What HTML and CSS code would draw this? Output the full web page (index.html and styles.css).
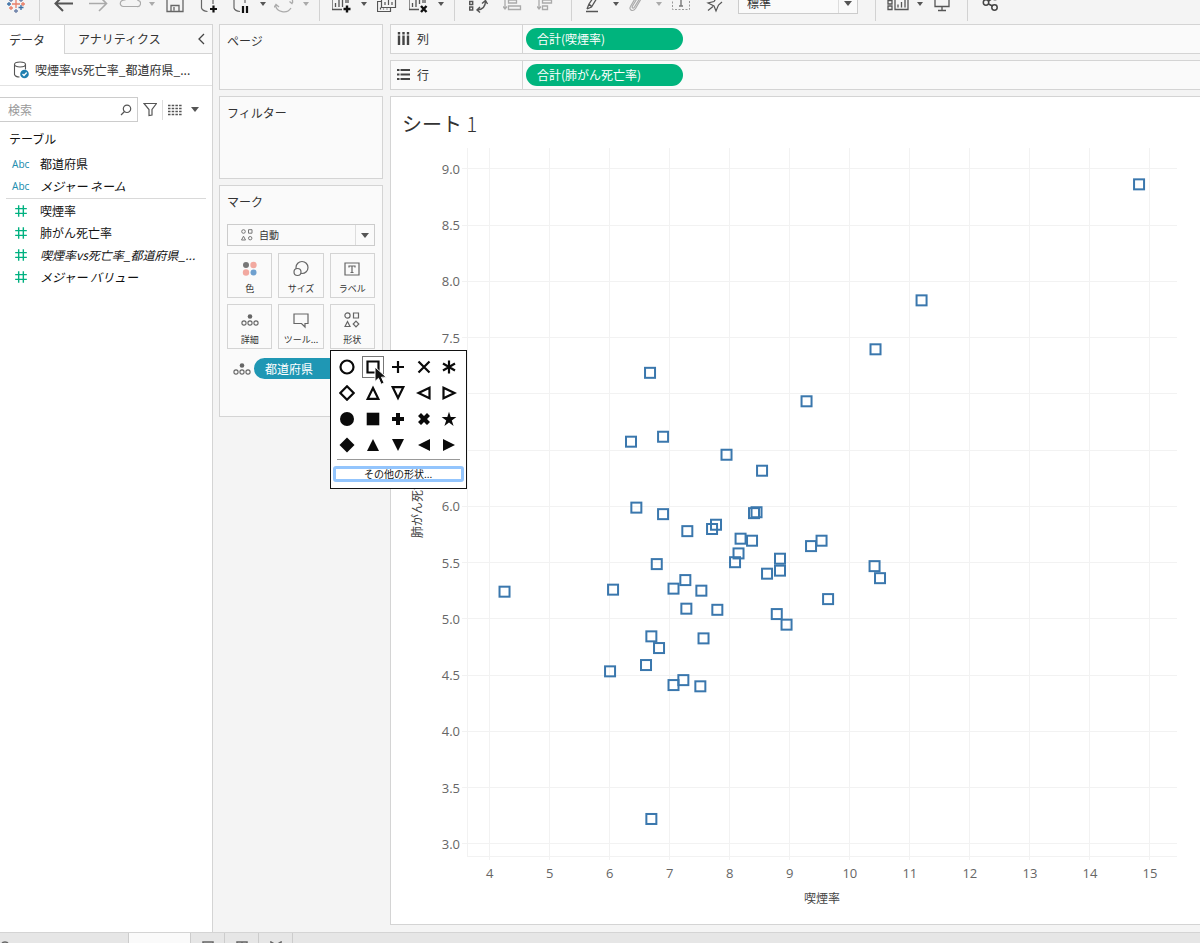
FILE: index.html
```
<!DOCTYPE html>
<html lang="ja">
<head>
    <meta charset="UTF-8">
    <meta name="viewport" content="width=device-width, initial-scale=1.0">
    <title>シート 1</title>
    <link rel="stylesheet" href="styles.css">
</head>
<body>
    <!-- Toolbar -->
    <header class="toolbar">
        <button class="tool" aria-label="スタート ページ"><svg width="20" height="20" viewBox="0 0 20 20" fill="none" stroke-width="1.3"><path d="M10 6v8M6 10h8" stroke="#e8806a"/><path d="M15 11v5M12.500 13.500h5M3 8v4M1 10h4" stroke="#3a6fa5"/><path d="M5 12v4M3 14h4M17 8v4M15 10h4" stroke="#e8806a"/><path d="M10 15v4M8 17h4M5 4v4M3 6h4M15 4v4M13 6h4" stroke="#6b7fa8"/></svg></button>
        <span class="sep"></span>
        <button class="tool" aria-label="元に戻す"><svg width="20" height="20" viewBox="0 0 20 20" fill="none" stroke="#555" stroke-width="2"><path d="M19 9.500H2M9 2L1.500 9.500 9 17"/></svg></button>
        <button class="tool" aria-label="やり直し"><svg width="20" height="20" viewBox="0 0 20 20" fill="none" stroke="#aaa" stroke-width="1.6"><path d="M1 9.500h17M11 2l7.500 7.500L11 17"/></svg></button>
        <button class="tool split" aria-label="保存"><svg width="22" height="20" viewBox="0 0 22 20" fill="none" stroke="#aaa" stroke-width="1.2"><path d="M4.500 12.500h13.500a3 3 0 0 0 1-6C18 2 9 1 6 6c-6 0-6 6-1.500 6.500z"/></svg></button>
        <button class="caret pale" aria-label="保存メニュー"></button>
        <button class="tool" aria-label="ファイルに保存"><svg width="18" height="20" viewBox="0 0 18 20" fill="none" stroke="#666" stroke-width="1.300"><path d="M1 1h13l3 3v13.500H1zM5 17v-5.500h8V17M8 13v3.500"/></svg></button>
        <button class="tool" aria-label="新しいデータ ソース"><svg width="20" height="20" viewBox="0 0 20 20" fill="none" stroke="#666" stroke-width="1.200"><path d="M2.500 3v11q1 3 6 3.500M14 3v7"/><path d="M14.500 11.500v7M11 15h7" stroke="#111" stroke-width="2.200"/></svg></button>
        <button class="tool split" aria-label="自動更新の一時停止"><svg width="20" height="20" viewBox="0 0 20 20" fill="none" stroke="#666" stroke-width="1.200"><path d="M3 3v11q1 3 6 3.500M14 3v6"/><path d="M12 12v7M16 12v7" stroke="#111" stroke-width="2.200"/></svg></button>
        <button class="caret" aria-label="自動更新メニュー"></button>
        <button class="tool split" aria-label="更新の実行"><svg width="20" height="20" viewBox="0 0 20 20" fill="none" stroke="#aaa" stroke-width="1.300"><path d="M1.500 11a8.300 7.500 0 0 0 15.500 3M18.500 9A8.300 8 0 0 0 3 4M0 13.500l2-3 3 2.500M15.500 7.500l3 2.500"/></svg></button>
        <button class="caret pale" aria-label="更新メニュー"></button>
        <span class="sep"></span>
        <button class="tool split" aria-label="新しいワークシート"><svg width="20" height="20" viewBox="0 0 20 20" fill="none" stroke="#555" stroke-width="1.300"><path d="M10 15.500H0V2h16v7M3.500 13V9M7 13V6M10.500 13V3M14 9V6"/><path d="M15 11.500v7M11.500 15h7" stroke="#111" stroke-width="2.400"/></svg></button>
        <button class="caret" aria-label="新しいワークシート メニュー"></button>
        <button class="tool" aria-label="複製"><svg width="20" height="20" viewBox="0 0 20 20" fill="none" stroke="#555" stroke-width="1.200"><path d="M4 7.500H.5v10h13v-4M4.500 4v9.500h14V3M3.500 15.500v-2M6.500 15.500v-1M10 15.500v-1M8 11V8M11.500 11V6M15 11V8"/></svg></button>
        <button class="tool split" aria-label="シートのクリア"><svg width="20" height="20" viewBox="0 0 20 20" fill="none" stroke="#555" stroke-width="1.300"><path d="M10 15.500H0V2h16v7M3.500 13V9M7 13V6M10.500 10V3M14 9V6"/><path d="M12 12l5.500 6M17.500 12L12 18" stroke="#111" stroke-width="2.400"/></svg></button>
        <button class="caret" aria-label="クリア メニュー"></button>
        <span class="sep"></span>
        <button class="tool" aria-label="行と列の交換"><svg width="20" height="20" viewBox="0 0 20 20" fill="none" stroke="#555" stroke-width="1.400"><path d="M.7 7.500h3v3h-3zM.7 13h3v3h-3zM8 16q8.500-.5 8.500-9M11 13l-3 3 3 2.500M13 9.500l3.500-3 2 3.500"/></svg></button>
        <button class="tool" aria-label="昇順で並べ替え"><svg width="20" height="20" viewBox="0 0 20 20" fill="none" stroke="#aaa" stroke-width="1.300"><path d="M2 3v12.500M0 12.500l2 2.500 2-2.500M5.500 6h8v3h-8zM5.500 12h12v3.500h-12z"/></svg></button>
        <button class="tool" aria-label="降順で並べ替え"><svg width="20" height="20" viewBox="0 0 20 20" fill="none" stroke="#aaa" stroke-width="1.300"><path d="M2 3v12.500M0 12.500l2 2.500 2-2.500M5.500 6h9v3h-9zM5.500 12h5v3.500h-5z"/></svg></button>
        <span class="sep"></span>
        <button class="tool split" aria-label="ハイライト"><svg width="20" height="20" viewBox="0 0 20 20" fill="none" stroke="#555" stroke-width="1.300"><path d="M3 15l2-5L11 1M3 15l4.500-2L13 4M5 10l3 3M2 17.500h12"/></svg></button>
        <button class="caret" aria-label="ハイライト メニュー"></button>
        <button class="tool split" aria-label="グループ"><svg width="20" height="20" viewBox="0 0 20 20" fill="none" stroke="#aaa" stroke-width="1.200"><path d="M11 3L5.500 12c-1 2 1 3 2 1L13 4M14 5l-5.500 9.500c-3 4-7 1-5-2L9 3"/></svg></button>
        <button class="caret pale" aria-label="グループ メニュー"></button>
        <button class="tool" aria-label="マーク ラベル"><svg width="20" height="20" viewBox="0 0 20 20" fill="none"><path d="M.5 4v11.500h17V4" stroke="#999" stroke-dasharray="2 1.500"/><path d="M9 4v8M7 12h4" stroke="#777" stroke-width="1.400"/></svg></button>
        <button class="tool" aria-label="軸の固定"><svg width="20" height="20" viewBox="0 0 20 20" fill="none" stroke="#555" stroke-width="1.200"><path d="M11 3L8 7.500 2 9l6 3 2 5 2.500-6L16 8M7 12.500l-5 4"/></svg></button>
        <span class="select fit">
            <select aria-label="表示方法"><option>標準</option></select>
        </span>
        <span class="sep"></span>
        <button class="tool split" aria-label="表示形式"><svg width="22" height="20" viewBox="0 0 22 20" fill="none" stroke="#555" stroke-width="1.300"><path d="M1 6.500h4v3.500H1zM1 12h4v3.500H1zM8 3v12.500h13V3M11 13.500v-3M14.500 13.500V8M18 13.500V6"/></svg></button>
        <button class="caret" aria-label="表示形式メニュー"></button>
        <button class="tool" aria-label="プレゼンテーション モード"><svg width="18" height="20" viewBox="0 0 18 20" fill="none" stroke="#555" stroke-width="1.300"><path d="M1 4v8.500h14V4M8 12.500V17M4 16.500h8"/></svg></button>
        <span class="sep"></span>
        <button class="tool" aria-label="共有"><svg width="20" height="20" viewBox="0 0 20 20" fill="none" stroke="#444" stroke-width="1.500"><circle cx="4" cy="8.500" r="2.700"/><circle cx="12.500" cy="13.500" r="2.700"/><circle cx="13" cy="3" r="2.700"/><path d="M6.500 10l4 2M6.500 7l4-2.500"/></svg></button>
    </header>

    <main class="workspace">
        <!-- Data pane -->
        <aside class="data-pane">
            <div class="pane-tabs">
                <button class="pane-tab active">データ</button>
                <button class="pane-tab">アナリティクス
                    <svg width="8" height="12" viewBox="0 0 8 12" fill="none" stroke="#444" stroke-width="1.300"><path d="M7 1L2 6l5 5"/></svg>
                </button>
            </div>
            <div class="source">
                <svg width="16" height="18" viewBox="0 0 16 18" fill="none" stroke="#555" stroke-width="1.100"><ellipse cx="7" cy="3.500" rx="5.500" ry="2.500"/><path d="M1.500 3.500v10q1 2.500 5 2.500M12.500 3.500v5"/><circle cx="11.500" cy="13" r="4.300" fill="#1f7fb0" stroke="none"/><path d="M9.500 13l1.500 1.500 2.700-3" stroke="#fff" stroke-width="1.300"/></svg>
                <span>喫煙率vs死亡率_都道府県_...</span>
            </div>
            <div class="search-row">
                <div class="search">
                    <input type="text" placeholder="検索" aria-label="検索">
                    <svg width="12" height="12" viewBox="0 0 12 12" fill="none" stroke="#555" stroke-width="1.200"><circle cx="7" cy="4.800" r="3.700"/><path d="M4.500 7.500L1 11"/></svg>
                </div>
                <button class="icon-button" aria-label="フィルター"><svg width="14" height="15" viewBox="0 0 14 15" fill="none" stroke="#555" stroke-width="1.200"><path d="M1 1.500h12.500L9 7.500v5.500l-3 .5V7.500z"/></svg></button>
                <button class="icon-button list" aria-label="表示"><svg width="14" height="12" viewBox="0 0 14 12" stroke="#555" stroke-width="1.300"><path d="M0 1.500h14M0 4.500h14M0 7.500h14M0 10.500h14" stroke-dasharray="2.500 1.200"/></svg></button>
                <button class="caret large" aria-label="表示メニュー"></button>
            </div>
            <h2>テーブル</h2>
            <ul class="fields">
                <li><span class="abc">Abc</span>都道府県</li>
                <li class="generated"><span class="abc">Abc</span>メジャー ネーム</li>
            </ul>
            <ul class="fields measures">
                <li><svg class="hash" viewBox="0 0 12 12"><path d="M4 1v10M8 1v10M1 4h10M1 8h10"/></svg>喫煙率</li>
                <li><svg class="hash" viewBox="0 0 12 12"><path d="M4 1v10M8 1v10M1 4h10M1 8h10"/></svg>肺がん死亡率</li>
                <li class="generated"><svg class="hash" viewBox="0 0 12 12"><path d="M4 1v10M8 1v10M1 4h10M1 8h10"/></svg>喫煙率vs死亡率_都道府県_...</li>
                <li class="generated"><svg class="hash" viewBox="0 0 12 12"><path d="M4 1v10M8 1v10M1 4h10M1 8h10"/></svg>メジャー バリュー</li>
            </ul>
        </aside>

        <!-- Cards -->
        <section class="cards">
            <div class="card pages"><h3>ページ</h3></div>
            <div class="card filters"><h3>フィルター</h3></div>
            <div class="card marks">
                <h3>マーク</h3>
                <div class="select mark-type">
                    <svg width="12" height="12" viewBox="0 0 12 12" fill="none" stroke="#777"><circle cx="2.500" cy="2.500" r="1.800"/><path d="M7.500 .7H11v3.500H7.500zM.5 11l2-3.800 2 3.800z"/><circle cx="9.200" cy="9.200" r="1.700"/></svg>
                    <select aria-label="マーク タイプ"><option>自動</option></select>
                </div>
                <div class="mark-grid">
                    <button><svg width="18" height="18" viewBox="0 0 18 18"><circle cx="5" cy="5" r="3" fill="#777"/><circle cx="12.500" cy="5" r="3.200" fill="#f2a9a0"/><circle cx="5" cy="12.500" r="3.200" fill="#f2a9a0"/><circle cx="12.500" cy="12.500" r="3" fill="#6fa0cf"/></svg>色</button>
                    <button><svg width="18" height="18" viewBox="0 0 18 18" fill="none" stroke="#666" stroke-width="1.200"><circle cx="10" cy="7.500" r="6"/><circle cx="5.500" cy="12" r="3.500" fill="#fafafa"/></svg>サイズ</button>
                    <button><svg width="18" height="18" viewBox="0 0 18 18" fill="none" stroke="#666" stroke-width="1.200"><path d="M2 3h14v12H2zM6 7.500V6h6v1.500M9 6v6.500M7.500 12.500h3"/></svg>ラベル</button>
                    <button><svg width="18" height="18" viewBox="0 0 18 18" fill="none" stroke="#666" stroke-width="1.100"><circle cx="9" cy="5.500" r="2.300" fill="#666" stroke="none"/><circle cx="3" cy="12" r="2.100"/><circle cx="9" cy="12" r="2.100"/><circle cx="15" cy="12" r="2.100"/></svg>詳細</button>
                    <button><svg width="18" height="18" viewBox="0 0 18 18" fill="none" stroke="#666" stroke-width="1.200"><path d="M2 3h14v9.500h-3V16l-3.500-3.500H2z"/></svg>ツール...</button>
                    <div class="shape-slot">
                        <button><svg width="18" height="18" viewBox="0 0 18 18" fill="none" stroke="#666" stroke-width="1.200"><circle cx="4.500" cy="4.500" r="2.600"/><path d="M10.500 2h5v5h-5zM2 15.500l2.500-5 2.500 5zM13 10.200l2.800 2.800-2.800 2.800-2.800-2.800z"/></svg>形状</button>
                        <div class="shape-menu">
                            <div class="shapes">
                                <button aria-label="円"><svg class="open" viewBox="0 0 16 16"><circle cx="8" cy="8" r="6.500"/></svg></button>
                                <button class="current" aria-label="四角"><svg class="open" viewBox="0 0 16 16"><path d="M2.500 2.500h11v11h-11z"/></svg></button>
                                <button aria-label="プラス"><svg class="open" viewBox="0 0 16 16"><path d="M8 2v12M2 8h12"/></svg></button>
                                <button aria-label="バツ"><svg class="open" viewBox="0 0 16 16"><path d="M2.500 2.500l11 11M13.500 2.500l-11 11"/></svg></button>
                                <button aria-label="アスタリスク"><svg class="open" viewBox="0 0 16 16"><path d="M8 1.500v13M2 4.500l12 7M14 4.500l-12 7"/></svg></button>
                                <button aria-label="ひし形"><svg class="open" viewBox="0 0 16 16"><path d="M8 1.300L14.700 8 8 14.700 1.300 8z"/></svg></button>
                                <button aria-label="上三角"><svg class="open" viewBox="0 0 16 16"><path d="M8 3l5.300 10.800H2.700z"/></svg></button>
                                <button aria-label="下三角"><svg class="open" viewBox="0 0 16 16"><path d="M8 13L2.700 2.200h10.600z"/></svg></button>
                                <button aria-label="左三角"><svg class="open" viewBox="0 0 16 16"><path d="M2.500 8L13.500 2.700v10.600z"/></svg></button>
                                <button aria-label="右三角"><svg class="open" viewBox="0 0 16 16"><path d="M13.500 8L2.500 2.700v10.600z"/></svg></button>
                                <button aria-label="塗りつぶし円"><svg viewBox="0 0 16 16"><circle cx="8" cy="8" r="7"/></svg></button>
                                <button aria-label="塗りつぶし四角"><svg viewBox="0 0 16 16"><path d="M1.700 1.700h12.600v12.600H1.700z"/></svg></button>
                                <button aria-label="太いプラス"><svg viewBox="0 0 16 16"><path d="M6 2h4v4h4v4h-4v4H6v-4H2V6h4z"/></svg></button>
                                <button aria-label="太いバツ"><svg viewBox="0 0 16 16"><path d="M5 2l3 3 3-3 3 3-3 3 3 3-3 3-3-3-3 3-3-3 3-3-3-3z"/></svg></button>
                                <button aria-label="星"><svg viewBox="0 0 16 16"><path d="M8 .7l1.700 5.300h5.700l-4.600 3.400 1.800 5.600L8 11.600 3.400 15l1.800-5.600L.6 6h5.700z"/></svg></button>
                                <button aria-label="塗りつぶしひし形"><svg viewBox="0 0 16 16"><path d="M8 .5L15.500 8 8 15.500.5 8z"/></svg></button>
                                <button aria-label="塗りつぶし上三角"><svg viewBox="0 0 16 16"><path d="M8 2l6 12H2z"/></svg></button>
                                <button aria-label="塗りつぶし下三角"><svg viewBox="0 0 16 16"><path d="M8 14L2 2h12z"/></svg></button>
                                <button aria-label="塗りつぶし左三角"><svg viewBox="0 0 16 16"><path d="M2 8l12-6v12z"/></svg></button>
                                <button aria-label="塗りつぶし右三角"><svg viewBox="0 0 16 16"><path d="M14 8L2 2v12z"/></svg></button>
                            </div>
                            <button class="more-shapes">その他の形状...</button>
                            <svg class="pointer" width="14" height="20" viewBox="0 0 14 20"><path d="M1 1v14.500l3.500-3.200 2.600 6 3-1.300-2.600-5.800h4.800z" fill="#111" stroke="#fff"/></svg>
                        </div>
                    </div>
                </div>
                <div class="mark-field">
                    <svg width="18" height="18" viewBox="0 0 18 18" fill="none" stroke="#666" stroke-width="1.100"><circle cx="9" cy="5.500" r="2.300" fill="#666" stroke="none"/><circle cx="3" cy="12" r="2.100"/><circle cx="9" cy="12" r="2.100"/><circle cx="15" cy="12" r="2.100"/></svg>
                    <button class="pill dimension">都道府県</button>
                </div>
            </div>
        </section>

        <!-- Shelves and sheet -->
        <section class="view">
            <div class="shelf">
                <span class="shelf-name"><svg width="14" height="14" viewBox="0 0 14 14" stroke="#444" stroke-width="2.400"><path d="M2 0v2.500M2 3.500V13M6.500 0v2.500M6.500 3.500V13M11 0v2.500M11 3.500V13"/></svg>列</span>
                <button class="pill">合計(喫煙率)</button>
            </div>
            <div class="shelf">
                <span class="shelf-name"><svg width="14" height="14" viewBox="0 0 14 14" stroke="#444" stroke-width="2"><path d="M0 2h2.500M3.500 2H13M0 6.500h2.500M3.500 6.500H13M0 11h2.500M3.500 11H13"/></svg>行</span>
                <button class="pill">合計(肺がん死亡率)</button>
            </div>
            <div class="sheet">
                <h1>シート <span>1</span></h1>
                <div id="chart"></div>
            </div>
        </section>
    </main>

    <!-- Sheet tabs -->
    <footer class="sheet-tabs">
        <button class="source-tab" aria-label="データ ソース"><svg width="12" height="12" viewBox="0 0 12 12" fill="none" stroke="#666" stroke-width="1.500"><ellipse cx="5" cy="3" rx="3" ry="2"/></svg></button>
        <button class="sheet-tab" aria-label="シート 1"></button>
        <button class="new-tab" aria-label="新しいワークシート"><svg width="12" height="12" viewBox="0 0 12 12" fill="none" stroke="#666" stroke-width="1.500"><path d="M1 1h10v10H1z"/></svg></button>
        <button class="new-tab" aria-label="新しいダッシュボード"><svg width="12" height="12" viewBox="0 0 12 12" fill="none" stroke="#666" stroke-width="1.500"><path d="M1 1h10v10H1zM6 1v10"/></svg></button>
        <button class="new-tab" aria-label="新しいストーリー"><svg width="12" height="12" viewBox="0 0 12 12" fill="none" stroke="#666" stroke-width="1.500"><path d="M1 11V1l5 3 5-3v10"/></svg></button>
    </footer>

    <script src="chart.js"></script>
</body>
</html>
```
FILE: styles.css
```
* {
    box-sizing: border-box;
}

body {
    font-family: "Noto Sans CJK JP", sans-serif;
    font-size: 12px;
    line-height: 18px;
    color: #333;
    margin: 0;
    display: flex;
    flex-direction: column;
    min-height: 100vh;
    background-color: #f4f4f4;
}

h1, h2, h3, ul {
    margin: 0;
    padding: 0;
    font-weight: normal;
}

button, input, select {
    font: inherit;
    color: inherit;
    margin: 0;
    padding: 0;
    border: none;
    background: none;
}

svg {
    display: block;
    flex: none;
}

/* Toolbar */
.toolbar {
    display: flex;
    align-items: flex-end;
    height: 24px;
    padding-bottom: 10px;
    overflow: hidden;
}

.tool {
    display: flex;
    justify-content: center;
    flex: none;
    width: 34px;
}

.tool:first-child {
    width: 32px;
}

.tool.split {
    width: 30px;
}

.caret {
    flex: none;
    width: 13px;
    height: 20px;
}

.caret::before,
.select::after {
    content: "";
    display: block;
    width: 0;
    margin: auto;
    border: 3px solid transparent;
    border-top: 4px solid #555;
    border-bottom: none;
}

.caret.pale::before {
    border-top-color: #aaa;
}

.sep {
    flex: none;
    width: 1px;
    height: 30px;
    margin: 0 7px -7px;
    background-color: #d2d2d2;
}

.select {
    display: flex;
    align-items: center;
    border: 1px solid #ccc;
    background-color: #fafafa;
    position: relative;
}

.select select {
    appearance: none;
    flex: 1;
    align-self: stretch;
    border-right: 1px solid #ddd;
    margin-right: 18px;
}

.select::after {
    position: absolute;
    right: 5px;
    border-width: 5px 4px 0;
}

.fit {
    flex: none;
    width: 120px;
    height: 22px;
    margin: 0 10px 0 5px;
}

.fit select {
    padding-left: 8px;
}

/* Workspace */
.workspace {
    display: flex;
    flex: 1;
}

.data-pane {
    flex: none;
    width: 213px;
    border-top: 1px solid #d4d4d4;
    border-right: 1px solid #d4d4d4;
    background-color: white;
}

.pane-tabs {
    display: flex;
    height: 29px;
}

.pane-tab {
    width: 64px;
    padding-left: 9px;
    text-align: left;
}

.pane-tab:not(.active) {
    display: flex;
    flex: 1;
    justify-content: space-between;
    align-items: center;
    padding: 0 7px 0 13px;
    border-left: 1px solid #d4d4d4;
    border-bottom: 1px solid #d4d4d4;
    background-color: #f9f9f9;
}

.source {
    display: flex;
    align-items: center;
    gap: 6px;
    height: 32px;
    padding-left: 13px;
    border-bottom: 1px solid #e2e2e2;
    white-space: nowrap;
}

.search-row {
    display: flex;
    align-items: center;
    margin-top: 11px;
}

.search {
    display: flex;
    align-items: center;
    flex: none;
    width: 138px;
    height: 25px;
    padding: 0 5px 0 8px;
    border: 1px solid #ccc;
    border-left: none;
}

.search input {
    flex: 1;
    min-width: 0;
    outline: none;
}

.search input::placeholder {
    color: #999;
    opacity: 1;
}

.icon-button {
    flex: none;
    padding: 4px 5px;
}

.icon-button.list {
    border-left: 1px solid #ddd;
}

.caret.large {
    width: 16px;
}

.caret.large::before {
    border-width: 5px 4px 0;
}

.data-pane h2 {
    margin-top: 8px;
    padding-left: 9px;
    font-size: 12px;
    color: #111;
}

.fields {
    margin: 5px 6px 0;
    list-style: none;
    color: #111;
}

.fields li {
    display: flex;
    align-items: center;
    height: 22px;
    padding-left: 6px;
    white-space: nowrap;
}

.fields .generated {
    font-style: italic;
}

.measures {
    margin-top: 1px;
    padding-top: 1px;
    border-top: 1px solid #d9d9d9;
}

.abc {
    width: 28px;
    font-family: "Noto Sans", sans-serif;
    font-size: 10px;
    font-style: normal;
    color: #1f8fb0;
}

.hash {
    width: 14px;
    height: 14px;
    margin: 0 12px 0 2px;
    fill: none;
    stroke: #00b180;
    stroke-width: 1.2;
}

/* Cards */
.cards {
    display: flex;
    flex-direction: column;
    flex: none;
    gap: 6px;
    width: 177px;
    padding: 0 7px 0 6px;
}

.card {
    padding: 7px;
    border: 1px solid #d4d4d4;
    background-color: #fafafa;
}

.card h3 {
    font-size: 12px;
}

.pages {
    min-height: 66px;
}

.filters {
    min-height: 83px;
}

.marks {
    min-height: 232px;
}

.mark-type {
    height: 22px;
    margin-top: 13px;
    padding-left: 13px;
    gap: 6px;
    font-size: 10px;
}

.mark-grid {
    display: grid;
    grid-template-columns: repeat(3, 1fr);
    gap: 6px;
    margin-top: 7px;
}

.shape-slot {
    position: relative;
}

.mark-grid > button,
.shape-slot > button {
    display: flex;
    flex-direction: column;
    align-items: center;
    gap: 4px;
    width: 100%;
    height: 45px;
    padding-top: 6px;
    border: 1px solid #d4d4d4;
    font-size: 9px;
    line-height: 14px;
    white-space: nowrap;
}

.mark-field {
    display: flex;
    align-items: center;
    gap: 3px;
    margin-top: 9px;
    padding-left: 6px;
}

.pill {
    width: 157px;
    height: 22px;
    padding-left: 11px;
    border-radius: 11px;
    background-color: #00b47d;
    color: white;
    text-align: left;
}

.pill.dimension {
    width: 120px;
    height: 21px;
    background-color: #1f97b4;
}

/* Shape menu */
.shape-menu {
    position: absolute;
    top: calc(100% + 1px);
    left: 0;
    z-index: 1;
    width: 137px;
    padding: 3px 2px 6px;
    border: 1px solid #111;
    background-color: white;
}

.shapes {
    display: grid;
    grid-template-columns: repeat(5, 1fr);
    margin: 0 2px;
}

.shapes button {
    display: flex;
    align-items: center;
    justify-content: center;
    height: 26px;
}

.shapes svg {
    width: 16px;
    height: 16px;
    fill: #0a0a0a;
}

.shapes .open {
    fill: none;
    stroke: #0a0a0a;
    stroke-width: 2.2;
}

.shapes .current svg {
    width: 22px;
    height: 22px;
    padding: 2px;
    border: 1px solid #777;
}

.more-shapes {
    display: block;
    width: 100%;
    height: 16px;
    margin-top: 6px;
    border: 3px solid #93c5fd;
    border-radius: 3px;
    color: #111;
    font-size: 10px;
    line-height: 10px;
}

.shapes::after {
    content: "";
    grid-column: 1 / -1;
    height: 1px;
    margin: 1px 2px 0;
    background-color: #999;
}

.pointer {
    position: absolute;
    left: 43px;
    top: 15px;
}

/* Shelves and sheet */
.view {
    display: flex;
    flex-direction: column;
    flex: 1;
    min-width: 0;
    padding-bottom: 7px;
}

.shelf {
    display: flex;
    align-items: center;
    gap: 3px;
    height: 30px;
    margin-bottom: 6px;
    border: 1px solid #d4d4d4;
    border-right: none;
    background-color: #fafafa;
}

.shelf-name {
    display: flex;
    align-items: center;
    align-self: stretch;
    gap: 6px;
    width: 132px;
    padding-left: 6px;
    border-right: 1px solid #d4d4d4;
}

.sheet {
    display: flex;
    flex-direction: column;
    flex: 1;
    border: 1px solid #d4d4d4;
    border-right: none;
    background-color: white;
}

.sheet h1 {
    padding: 13px 11px 10px;
    font-size: 20px;
    line-height: 28px;
}

.sheet h1 span {
    font-weight: 300;
}

#chart {
    flex: 1;
    min-height: 300px;
    overflow: hidden;
}

#chart line {
    stroke: #f2f2f2;
    shape-rendering: crispEdges;
}

#chart text {
    font-family: "Open Sans", "Noto Sans CJK JP", sans-serif;
    font-size: 13px;
    fill: #666;
}

#chart .axis-title {
    font-size: 12px;
    fill: #444;
}

#chart .mark {
    fill: none;
    stroke: #3a77ad;
    stroke-width: 2;
}

/* Sheet tabs */
.sheet-tabs {
    display: flex;
    height: 11px;
    overflow: hidden;
    border-top: 1px solid #d4d4d4;
    background-color: #e6e6e6;
}

.sheet-tabs button {
    display: flex;
    height: 24px;
    padding-top: 8px;
    border-right: 1px solid #ccc;
}

.sheet-tabs .source-tab {
    width: 129px;
}

.sheet-tabs .sheet-tab {
    width: 62px;
    background-color: #fafafa;
}

.sheet-tabs .new-tab {
    justify-content: center;
    width: 34px;
}
```
FILE: chart.js
```
// [smoking rate, lung cancer death rate] for each prefecture
const data = [
    [14.818, 8.862], [11.195, 7.831], [10.428, 7.396], [9.279, 6.934], [6.672, 7.187],
    [6.355, 6.575], [6.889, 6.619], [7.946, 6.459], [8.538, 6.317], [6.444, 5.989],
    [6.889, 5.931], [7.293, 5.780], [7.705, 5.799], [7.771, 5.837], [8.404, 5.940],
    [8.446, 5.948], [8.180, 5.713], [8.371, 5.695], [8.146, 5.582], [8.088, 5.504],
    [8.837, 5.535], [8.837, 5.429], [8.621, 5.402], [9.354, 5.647], [9.529, 5.695],
    [10.412, 5.469], [10.503, 5.362], [6.784, 5.487], [6.056, 5.260], [4.248, 5.242],
    [7.063, 5.269], [7.260, 5.345], [7.527, 5.251], [7.277, 5.091], [7.793, 5.081],
    [8.783, 5.043], [8.946, 4.949], [9.638, 5.176], [7.563, 4.827], [6.694, 4.845],
    [6.822, 4.741], [6.605, 4.590], [6.006, 4.534], [7.063, 4.412], [7.227, 4.456],
    [7.510, 4.401], [6.694, 3.222]
];

const margin = { top: 0, right: 23, bottom: 68, left: 76 };
const xDomain = [3.623, 15.45];
const yDomain = [2.893, 9.185];

function add(parent, name, attrs, text) {
    const el = document.createElementNS("http://www.w3.org/2000/svg", name);
    Object.keys(attrs).forEach(key => el.setAttribute(key, attrs[key]));
    if (text) el.textContent = text;
    parent.appendChild(el);
    return el;
}

function drawChart() {
    const chart = document.getElementById("chart");
    chart.innerHTML = "";
    const width = chart.clientWidth;
    const height = chart.clientHeight;
    const right = width - margin.right;
    const bottom = height - margin.bottom;
    const x = v => margin.left + (v - xDomain[0]) / (xDomain[1] - xDomain[0]) * (right - margin.left);
    const y = v => bottom - (v - yDomain[0]) / (yDomain[1] - yDomain[0]) * (bottom - margin.top);

    const svg = add(chart, "svg", { width: width, height: height });

    // Grid and tick labels
    for (let v = 4; v <= 15; v++) {
        add(svg, "line", { x1: x(v), x2: x(v), y1: margin.top, y2: bottom + 4 });
        add(svg, "text", { x: x(v), y: bottom + 22, "text-anchor": "middle" }, String(v));
    }
    for (let v = 3; v <= 9; v += 0.5) {
        add(svg, "line", { x1: margin.left - 5, x2: right, y1: y(v), y2: y(v) });
        add(svg, "text", { x: margin.left - 7, y: y(v) + 5, "text-anchor": "end" }, v.toFixed(1));
    }
    add(svg, "line", { x1: margin.left, x2: margin.left, y1: margin.top, y2: bottom });
    add(svg, "line", { x1: margin.left, x2: right, y1: bottom, y2: bottom });

    // Axis titles
    const middle = (margin.top + bottom) / 2;
    add(svg, "text", { class: "axis-title", x: (margin.left + right) / 2, y: bottom + 47, "text-anchor": "middle" }, "喫煙率");
    add(svg, "text", { class: "axis-title", x: 31, y: middle, "text-anchor": "middle", transform: `rotate(-90 31 ${middle})` }, "肺がん死亡率");

    data.forEach(d => {
        add(svg, "rect", { class: "mark", x: x(d[0]) - 5, y: y(d[1]) - 5, width: 10, height: 10 });
    });
}

drawChart();
window.addEventListener("resize", drawChart);
```
